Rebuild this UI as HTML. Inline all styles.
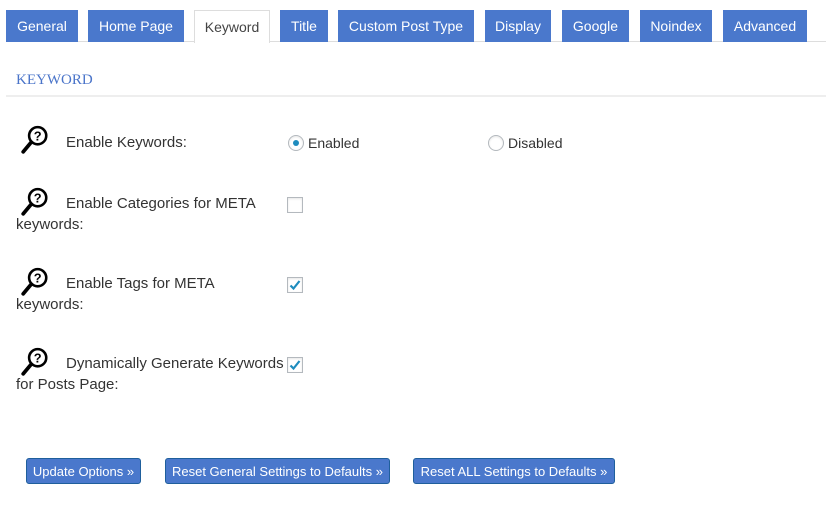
<!DOCTYPE html>
<html><head><style>
body{margin:0;width:826px;height:510px;background:#fff;font-family:"Liberation Sans",sans-serif;position:relative;overflow:hidden;color:#333}
.a{position:absolute}
.tab{position:absolute;top:10px;height:32px;background:#4a78cc;color:#fff;font-size:14px;line-height:32px;text-align:center}
.tab.on{background:#fff;color:#444;border:1px solid #ddd;border-bottom:none;box-sizing:border-box;height:33px;top:10px}
.lbl{position:absolute;left:16px;width:268px;font-size:15px;line-height:21px;text-indent:50px;color:#333}
.cb{position:absolute;left:287px;width:14px;height:14px;border:1px solid #b4b9be;background:#fff;box-shadow:inset 0 1px 2px rgba(0,0,0,.1)}
.rd{position:absolute;width:14px;height:14px;border:1px solid #b4b9be;border-radius:50%;background:#fff;box-shadow:inset 0 1px 2px rgba(0,0,0,.1)}
.btn{position:absolute;top:458px;height:26px;background:#4a78cc;border:1px solid #1f5f9c;border-radius:3px;color:#fff;font-size:13px;line-height:26px;text-align:center;box-sizing:border-box}
.ico{position:absolute;left:20px;width:30px;height:30px}
</style></head><body>
<div class="a" style="left:6px;top:41px;width:820px;height:1px;background:#ddd"></div>
<div class="tab" style="left:6px;width:72px">General</div>
<div class="tab" style="left:88px;width:96px">Home Page</div>
<div class="tab on" style="left:194px;width:76px">Keyword</div>
<div class="tab" style="left:280px;width:48px">Title</div>
<div class="tab" style="left:338px;width:136px">Custom Post Type</div>
<div class="tab" style="left:485px;width:66px">Display</div>
<div class="tab" style="left:562px;width:67px">Google</div>
<div class="tab" style="left:640px;width:72px">Noindex</div>
<div class="tab" style="left:723px;width:84px">Advanced</div>

<div class="a" style="left:16px;top:72px;font-family:'Liberation Serif',serif;font-size:15px;color:#4a74c9">KEYWORD</div>
<div class="a" style="left:6px;top:95px;width:820px;height:2px;background:#eee"></div>

<svg class="ico" style="top:125px" viewBox="0 0 28 28"><circle cx="16.5" cy="10" r="8" fill="none" stroke="#000" stroke-width="2.4"/><line x1="10.5" y1="16" x2="3" y2="25" stroke="#000" stroke-width="3.5" stroke-linecap="round"/><text x="16.5" y="14.5" font-size="12" font-weight="bold" text-anchor="middle" font-family="Liberation Sans">?</text></svg>
<div class="lbl" style="top:132px">Enable Keywords:</div>
<div class="rd" style="left:288px;top:135px"><div style="position:absolute;left:4px;top:4px;width:6px;height:6px;border-radius:50%;background:#1e8cbe"></div></div>
<div class="a" style="left:308px;top:135px;font-size:14px">Enabled</div>
<div class="rd" style="left:488px;top:135px"></div>
<div class="a" style="left:508px;top:135px;font-size:14px">Disabled</div>

<svg class="ico" style="top:187px" viewBox="0 0 28 28"><circle cx="16.5" cy="10" r="8" fill="none" stroke="#000" stroke-width="2.4"/><line x1="10.5" y1="16" x2="3" y2="25" stroke="#000" stroke-width="3.5" stroke-linecap="round"/><text x="16.5" y="14.5" font-size="12" font-weight="bold" text-anchor="middle" font-family="Liberation Sans">?</text></svg>
<div class="lbl" style="top:193px">Enable Categories for META keywords:</div>
<div class="cb" style="top:197px"></div>

<svg class="ico" style="top:267px" viewBox="0 0 28 28"><circle cx="16.5" cy="10" r="8" fill="none" stroke="#000" stroke-width="2.4"/><line x1="10.5" y1="16" x2="3" y2="25" stroke="#000" stroke-width="3.5" stroke-linecap="round"/><text x="16.5" y="14.5" font-size="12" font-weight="bold" text-anchor="middle" font-family="Liberation Sans">?</text></svg>
<div class="lbl" style="top:273px">Enable Tags for META keywords:</div>
<div class="cb" style="top:277px"><svg width="14" height="14" viewBox="0 0 14 14"><path d="M2.5 7.5 L5.5 10.5 L11.5 3" fill="none" stroke="#1e8cbe" stroke-width="2.2"/></svg></div>

<svg class="ico" style="top:347px" viewBox="0 0 28 28"><circle cx="16.5" cy="10" r="8" fill="none" stroke="#000" stroke-width="2.4"/><line x1="10.5" y1="16" x2="3" y2="25" stroke="#000" stroke-width="3.5" stroke-linecap="round"/><text x="16.5" y="14.5" font-size="12" font-weight="bold" text-anchor="middle" font-family="Liberation Sans">?</text></svg>
<div class="lbl" style="top:353px">Dynamically Generate Keywords for Posts Page:</div>
<div class="cb" style="top:357px"><svg width="14" height="14" viewBox="0 0 14 14"><path d="M2.5 7.5 L5.5 10.5 L11.5 3" fill="none" stroke="#1e8cbe" stroke-width="2.2"/></svg></div>

<div class="btn" style="left:26px;width:115px">Update Options »</div>
<div class="btn" style="left:165px;width:225px">Reset General Settings to Defaults »</div>
<div class="btn" style="left:413px;width:202px">Reset ALL Settings to Defaults »</div>
</body></html>
